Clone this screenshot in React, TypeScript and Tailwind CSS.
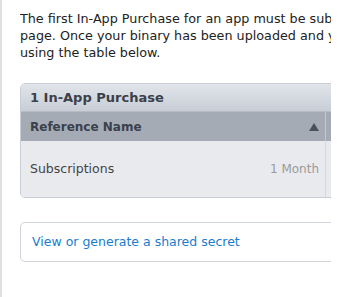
export default function App() {
  return (
    <div className="h-[297px] w-[360px] bg-white overflow-hidden" style={{ fontFamily: '"DejaVu Sans", sans-serif' }}>
      <div className="h-full border-l-2 border-[#e0e0e0] pl-[18px]">
        <div className="w-[311px] overflow-hidden pt-[10px]">
          <div className="w-[700px]">
            <p className="text-[12.75px] leading-[17px] text-[#222] whitespace-nowrap">
              The first In-App Purchase for an app must be submitted with a new app version. Select it from the
              <br />
              page. Once your binary has been uploaded and your first In-App Purchase has been submitted for review,
              <br />
              using the table below.
            </p>

            <div className="mt-[22px] rounded-[5px] border border-[#c9ced6] overflow-hidden">
              <div className="h-[28px] flex items-center px-[9px] bg-gradient-to-b from-[#e1e5ea] to-[#c8ced6] border-b border-[#b6bcc6]">
                <span className="text-[13px] font-bold text-[#3b4049]">1 In-App Purchase</span>
              </div>
              <div className="flex h-[29px] bg-[#a4abb5]">
                <div className="w-[305px] flex items-center justify-between pl-[9px] pr-[6px] border-r border-[#c4c9d0]">
                  <span className="text-[12px] font-bold text-[#3a414c]">Reference Name</span>
                  <svg width="10" height="8" viewBox="0 0 10 8">
                    <path d="M5 0 L10 8 L0 8 Z" fill="#4a515c" />
                  </svg>
                </div>
                <div className="flex-1" />
              </div>
              <div className="flex h-[56px] bg-[#e9eaee]">
                <div className="w-[305px] flex items-center justify-between pl-[9px] pr-[6px] border-r border-[#d6d8de]">
                  <span className="text-[12.5px] text-[#444]">Subscriptions</span>
                  <span className="text-[12px] text-[#9a9a9a]">1 Month</span>
                </div>
                <div className="flex-1" />
              </div>
            </div>

            <div className="mt-[24px] h-[40px] rounded-[5px] border border-[#cfd3da] flex items-center pl-[11px]">
              <span className="text-[12.5px] text-[#1a7ccc]">View or generate a shared secret</span>
            </div>
          </div>
        </div>
      </div>
    </div>
  );
}
